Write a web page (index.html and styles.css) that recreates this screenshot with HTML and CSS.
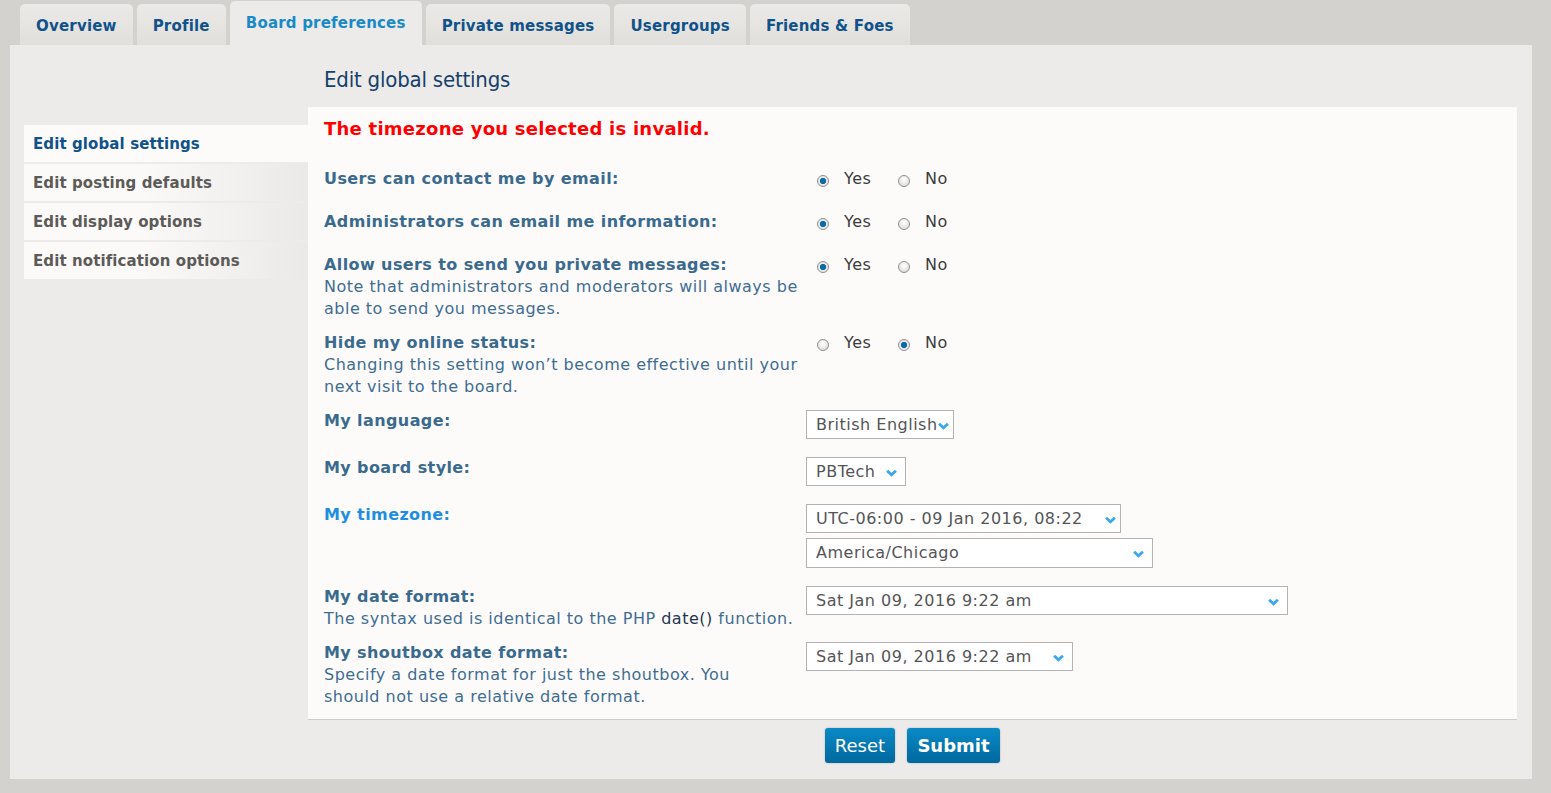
FILE: index.html
```html
<!DOCTYPE html>
<html lang="en">
<head>
    <meta charset="UTF-8">
    <title>User Control Panel - Board preferences</title>
    <link rel="stylesheet" href="styles.css">
</head>
<body>
    <ul class="tabs">
        <li class="tab">Overview</li>
        <li class="tab">Profile</li>
        <li class="tab active">Board preferences</li>
        <li class="tab">Private messages</li>
        <li class="tab">Usergroups</li>
        <li class="tab">Friends &amp; Foes</li>
    </ul>

    <div class="panel">
        <ul class="menu">
            <li class="menu-item current">Edit global settings</li>
            <li class="menu-item">Edit posting defaults</li>
            <li class="menu-item">Edit display options</li>
            <li class="menu-item">Edit notification options</li>
        </ul>

        <div class="main">
            <h2 class="page-title">Edit global settings</h2>

            <div class="settings">
                <p class="error">The timezone you selected is invalid.</p>

                <div class="row">
                    <div class="label"><b>Users can contact me by email:</b></div>
                    <div class="field radios">
                        <label class="opt"><span class="radio checked"></span>Yes</label>
                        <label class="opt"><span class="radio"></span>No</label>
                    </div>
                </div>

                <div class="row">
                    <div class="label"><b>Administrators can email me information:</b></div>
                    <div class="field radios">
                        <label class="opt"><span class="radio checked"></span>Yes</label>
                        <label class="opt"><span class="radio"></span>No</label>
                    </div>
                </div>

                <div class="row">
                    <div class="label">
                        <b>Allow users to send you private messages:</b>
                        <span class="explain">Note that administrators and moderators will always be able to send you messages.</span>
                    </div>
                    <div class="field radios">
                        <label class="opt"><span class="radio checked"></span>Yes</label>
                        <label class="opt"><span class="radio"></span>No</label>
                    </div>
                </div>

                <div class="row">
                    <div class="label">
                        <b>Hide my online status:</b>
                        <span class="explain">Changing this setting won’t become effective until your next visit to the board.</span>
                    </div>
                    <div class="field radios">
                        <label class="opt"><span class="radio"></span>Yes</label>
                        <label class="opt"><span class="radio checked"></span>No</label>
                    </div>
                </div>

                <div class="row">
                    <div class="label"><b>My language:</b></div>
                    <div class="field">
                        <div class="select tight w-lang">British English<svg class="chev" viewBox="0 0 10 7"><path d="M1 1.5 5 5.2 9 1.5" /></svg></div>
                    </div>
                </div>

                <div class="row">
                    <div class="label"><b>My board style:</b></div>
                    <div class="field">
                        <div class="select w-style">PBTech<svg class="chev" viewBox="0 0 10 7"><path d="M1 1.5 5 5.2 9 1.5" /></svg></div>
                    </div>
                </div>

                <div class="row">
                    <div class="label"><b class="hl">My timezone:</b></div>
                    <div class="field">
                        <div class="select tight w-tz">UTC-06:00 - 09 Jan 2016, 08:22<svg class="chev" viewBox="0 0 10 7"><path d="M1 1.5 5 5.2 9 1.5" /></svg></div>
                        <div class="select w-city">America/Chicago<svg class="chev" viewBox="0 0 10 7"><path d="M1 1.5 5 5.2 9 1.5" /></svg></div>
                    </div>
                </div>

                <div class="row">
                    <div class="label">
                        <b>My date format:</b>
                        <span class="explain">The syntax used is identical to the PHP <a class="code">date()</a> function.</span>
                    </div>
                    <div class="field">
                        <div class="select w-date">Sat Jan 09, 2016 9:22 am<svg class="chev" viewBox="0 0 10 7"><path d="M1 1.5 5 5.2 9 1.5" /></svg></div>
                    </div>
                </div>

                <div class="row last">
                    <div class="label">
                        <b>My shoutbox date format:</b>
                        <span class="explain">Specify a date format for just the shoutbox. You<br>should not use a relative date format.</span>
                    </div>
                    <div class="field">
                        <div class="select w-shout">Sat Jan 09, 2016 9:22 am<svg class="chev" viewBox="0 0 10 7"><path d="M1 1.5 5 5.2 9 1.5" /></svg></div>
                    </div>
                </div>
            </div>

            <div class="buttons">
                <button class="button">Reset</button>
                <button class="button primary">Submit</button>
            </div>
        </div>
    </div>
</body>
</html>
```

FILE: styles.css
```css
body {
    margin: 0;
    background: #d3d2ce;
    font-family: "DejaVu Sans", Verdana, sans-serif;
    color: #555;
}

/* tabs */
.tabs {
    list-style: none;
    margin: 0;
    padding: 0 0 0 20px;
    display: flex;
    align-items: flex-end;
    gap: 4px;
    height: 45px;
}
.tab {
    height: 41px;
    padding: 2px 16px 0;
    display: flex;
    align-items: center;
    box-sizing: border-box;
    border-radius: 5px 5px 0 0;
    background: linear-gradient(#ebeae8, #e0dfdb);
    color: #105289;
    font-weight: bold;
    font-size: 15px;
    letter-spacing: 0.2px;
}
.tab.active {
    height: 44px;
    padding: 0 16px 1px;
    background: #ecebe9;
    color: #1a8ac6;
}

/* panel */
.panel {
    margin: 0 19px 14px 10px;
    background: #ecebe9;
    display: grid;
    grid-template-columns: 284px 1fr;
    padding: 0 15px 16px 14px;
}
.menu {
    list-style: none;
    margin: 80px 0 0;
    padding: 0;
}
.menu-item {
    height: 37px;
    margin-bottom: 2px;
    padding-left: 9px;
    display: flex;
    align-items: center;
    background: linear-gradient(to right, #fbfaf9 40%, #eae9e7);
    color: #5d5b58;
    font-weight: bold;
    font-size: 15px;
    letter-spacing: 0.1px;
}
.menu-item.current {
    background: #fcfbfa;
    color: #105289;
}

.page-title {
    margin: 0;
    padding: 21px 0 13px 16px;
    font-family: "DejaVu Sans Condensed", "DejaVu Sans", sans-serif;
    font-weight: normal;
    font-size: 22px;
    line-height: 28px;
    color: #15416a;
    letter-spacing: -0.2px;
}

.settings {
    background: #fcfbfa;
    border-bottom: 1px solid #cfcdc9;
    padding: 11px 16px 0;
}
.error {
    margin: 0 0 28px;
    color: #ff0000;
    font-weight: bold;
    font-size: 18px;
    letter-spacing: 0.25px;
    line-height: 22px;
}

.row {
    display: flex;
    padding-bottom: 12px;
}
.row.last {
    padding-bottom: 11px;
}
.label {
    width: 482px;
    flex: none;
    font-size: 16px;
    line-height: 22px;
    color: #3e6a8e;
}
.label b {
    display: block;
    font-size: 16px;
    letter-spacing: 0.4px;
    color: #3b6a8f;
}
.label b.hl {
    color: #1e8fe0;
}
.explain {
    display: block;
    font-size: 16px;
    letter-spacing: 0.5px;
    color: #3f6d92;
    padding-right: 8px;
}
.code {
    color: #1f3652;
}

.field.radios {
    display: flex;
    min-height: 31px;
    font-size: 16px;
    letter-spacing: 0.5px;
    line-height: 22px;
    color: #3c3c3c;
}
.opt {
    display: flex;
    align-items: center;
    height: 22px;
    margin-left: 11px;
    width: 71px;
}
.opt + .opt {
    margin-left: 10px;
}
.radio {
    width: 12px;
    height: 12px;
    border-radius: 50%;
    margin: 4px 15px 0 0;
    box-sizing: border-box;
    border: 1px solid #8f8f8f;
    background: radial-gradient(circle at 50% 35%, #ffffff, #d6d6d6);
    flex: none;
}
.radio.checked {
    background: radial-gradient(circle, #0b6aa2 0 2.8px, #e8e8e8 3.4px);
}

.select {
    position: relative;
    box-sizing: border-box;
    height: 29px;
    margin-bottom: 6px;
    padding: 0 24px 0 9px;
    border: 1px solid #b3b3b3;
    background: #fff;
    color: #555;
    font-size: 16px;
    letter-spacing: 0.5px;
    line-height: 27px;
    white-space: nowrap;
    overflow: hidden;
}
.select + .select {
    margin-top: -1px;
    height: 30px;
    line-height: 28px;
}
.select.tight {
    padding-right: 0;
}
.chev {
    position: absolute;
    right: 8px;
    top: 11px;
    width: 11px;
    height: 8px;
    fill: none;
    stroke: #3ba8ee;
    stroke-width: 2.6;
}
.tight .chev {
    right: 4px;
}
.w-lang { width: 148px; }
.w-style { width: 100px; }
.w-tz { width: 315px; }
.w-city { width: 347px; }
.w-date { width: 482px; }
.w-shout { width: 267px; }

.buttons {
    display: flex;
    justify-content: center;
    gap: 12px;
    padding-top: 8px;
}
.button {
    height: 35px;
    border: none;
    border-radius: 3px;
    background: linear-gradient(#0a8ac5, #00689e);
    box-shadow: 0 0 2px rgba(0,0,0,0.25);
    color: #fff;
    font-family: "DejaVu Sans", Verdana, sans-serif;
    font-size: 18px;
    padding: 0 8px;
    width: 70px;
}
.button.primary {
    width: 93px;
    font-weight: bold;
    font-size: 18px;
}
```
